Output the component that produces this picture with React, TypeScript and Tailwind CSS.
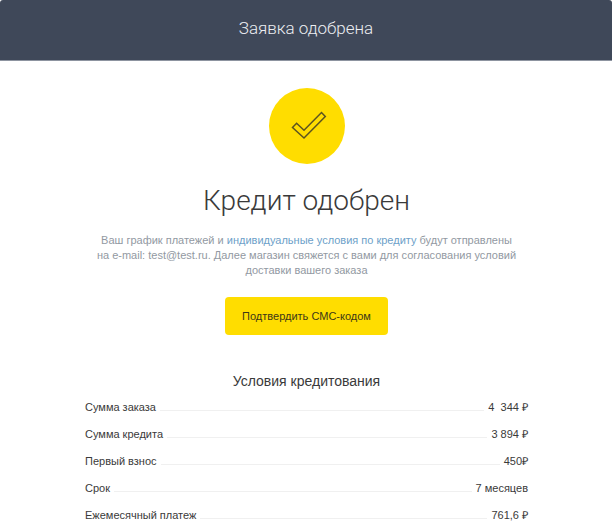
interface Term {
  label: string;
  value: string;
}

const TERMS: Term[] = [
  { label: 'Сумма заказа', value: '4\u00a0 344 ₽' },
  { label: 'Сумма кредита', value: '3 894 ₽' },
  { label: 'Первый взнос', value: '450₽' },
  { label: 'Срок', value: '7 месяцев' },
  { label: 'Ежемесячный платеж', value: '761,6 ₽' },
];

export default function App() {
  return (
    <div className="bg-white font-['Liberation_Sans',sans-serif] text-[#3a3a3a]">
      <header className="flex h-[61px] items-center justify-center rounded-t-[3px] border-b border-[#8d94a0] bg-[#3f4859] pb-1">
        <h2 className="font-['Roboto',sans-serif] text-[17px] leading-6 font-light text-[#eceef2]">
          Заявка одобрена
        </h2>
      </header>

      <main className="flex flex-col items-center pt-[27px] pr-[84px] pl-[85px]">
        <StatusIcon />

        <h1 className="mt-[17px] font-['Roboto',sans-serif] text-[28px] leading-10 font-light">
          Кредит одобрен
        </h1>

        <p className="mt-3 text-center text-[11px] leading-[15px] text-[#9299a2]">
          Ваш график платежей и{' '}
          <a href="#terms" className="text-[#6d9fc9]">
            индивидуальные условия по кредиту
          </a>{' '}
          будут отправлены
          <br />
          на e-mail: test@test.ru. Далее магазин свяжется с вами для согласования условий
          <br />
          доставки вашего заказа
        </p>

        <button
          type="button"
          className="mt-[19px] h-[38px] rounded bg-[#ffdd00] px-[17px] text-[11px] text-[#3d3817]"
        >
          Подтвердить СМС-кодом
        </button>

        <section id="terms" className="mt-9 w-full">
          <h3 className="text-center text-[14px] leading-5">Условия кредитования</h3>
          <table className="mt-[3px] block w-full text-[11px] leading-[27px]">
            <tbody className="block">
              {TERMS.map((term) => (
                <TermRow key={term.label} {...term} />
              ))}
            </tbody>
          </table>
        </section>
      </main>
    </div>
  );
}

function StatusIcon() {
  return (
    <div className="flex size-[76px] items-center justify-center rounded-full bg-[#ffdd00]">
      <svg width="36" height="30" viewBox="0 0 36 30" className="ml-1" fill="none" aria-hidden="true">
        <path
          d="M1.5 16.5 L5.6 12.2 L13 19.2 L30.5 1.5 L34.3 5.5 L13 27 Z"
          stroke="#5c5420"
          strokeWidth="1.5"
        />
      </svg>
    </div>
  );
}

function TermRow({ label, value }: Term) {
  return (
    <tr className="flex items-baseline">
      {/* thin leader between label and value */}
      <th
        scope="row"
        className="flex flex-1 items-baseline gap-1 font-normal after:flex-1 after:border-b after:border-[#f0f0f0] after:content-['']"
      >
        {label}
      </th>
      <td className="pl-1">{value}</td>
    </tr>
  );
}
